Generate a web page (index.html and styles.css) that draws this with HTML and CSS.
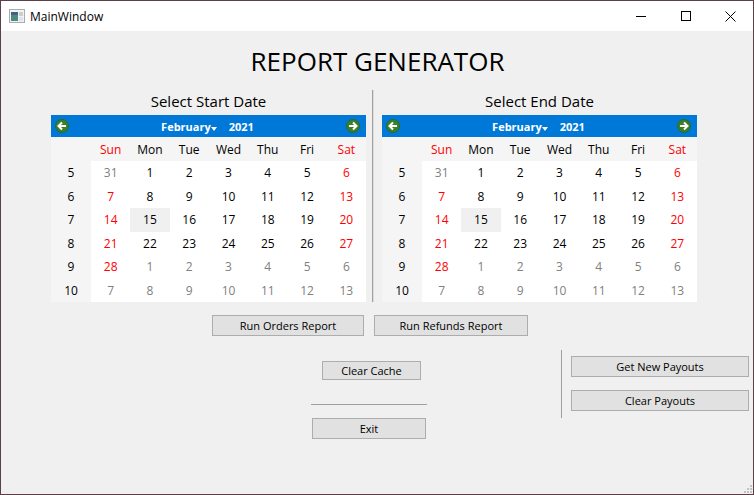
FILE: index.html
```html
<!DOCTYPE html>
<html lang="en">

<head>
    <meta charset="UTF-8">
    <title>MainWindow</title>
    <link rel="stylesheet" href="styles.css">
</head>

<body>
    <div class="window">
        <div class="titlebar">
            <svg class="appicon" width="16" height="16" viewBox="0 0 16 16">
                <rect x="0.5" y="1.5" width="15" height="13" fill="#f2f4f4" stroke="#a9adb0"></rect>
                <rect x="2" y="4" width="7" height="9" fill="#4f8a82"></rect>
                <rect x="2" y="4" width="7" height="3" fill="#45617e"></rect>
                <rect x="10" y="4" width="4" height="4" fill="#c9ced0"></rect>
                <rect x="10" y="9" width="4" height="4" fill="#dfe3e4"></rect>
            </svg>
            <span class="apptitle">MainWindow</span>
            <div class="winbtn">
                <svg width="10" height="10" viewBox="0 0 10 10"><path d="M0 5.5H10" stroke="#000" fill="none"></path></svg>
            </div>
            <div class="winbtn">
                <svg width="10" height="10" viewBox="0 0 10 10"><rect x="0.5" y="0.5" width="9" height="9" stroke="#000" fill="none"></rect></svg>
            </div>
            <div class="winbtn">
                <svg width="11" height="11" viewBox="0 0 11 11"><path d="M0.5 0.5L10.5 10.5M10.5 0.5L0.5 10.5" stroke="#000" fill="none"></path></svg>
            </div>
        </div>

        <div class="content">
            <h1 class="heading">REPORT GENERATOR</h1>

            <div class="calendars">
                <div class="calpanel">
                    <div class="callabel">Select Start Date</div>
                    <div class="calendar">
                        <div class="calnav">
                            <svg class="navicon" width="14" height="14" viewBox="0 0 14 14">
                                <circle cx="7" cy="7" r="6.5" fill="#38802a" stroke="#2a6a30"></circle>
                                <path d="M11 7H4M7 3.5L3.5 7L7 10.5" stroke="#fff" stroke-width="2" fill="none"></path>
                            </svg>
                            <div class="calmonth">
                                <span>February</span>
                                <svg class="monthmark" width="6" height="6" viewBox="0 0 6 6"><path d="M0 1H6L3 5Z" fill="#fff"></path></svg>
                                <span class="calyear">2021</span>
                            </div>
                            <svg class="navicon" width="14" height="14" viewBox="0 0 14 14">
                                <circle cx="7" cy="7" r="6.5" fill="#38802a" stroke="#2a6a30"></circle>
                                <path d="M3 7H10M7 3.5L10.5 7L7 10.5" stroke="#fff" stroke-width="2" fill="none"></path>
                            </svg>
                        </div>
                        <div class="calgrid">
                            <div class="hd"></div><div class="hd red">Sun</div><div class="hd">Mon</div><div class="hd">Tue</div><div class="hd">Wed</div><div class="hd">Thu</div><div class="hd">Fri</div><div class="hd red">Sat</div>
                            <div class="wk">5</div><div class="day off">31</div><div class="day">1</div><div class="day">2</div><div class="day">3</div><div class="day">4</div><div class="day">5</div><div class="day red">6</div>
                            <div class="wk">6</div><div class="day red">7</div><div class="day">8</div><div class="day">9</div><div class="day">10</div><div class="day">11</div><div class="day">12</div><div class="day red">13</div>
                            <div class="wk">7</div><div class="day red">14</div><div class="day today">15</div><div class="day">16</div><div class="day">17</div><div class="day">18</div><div class="day">19</div><div class="day red">20</div>
                            <div class="wk">8</div><div class="day red">21</div><div class="day">22</div><div class="day">23</div><div class="day">24</div><div class="day">25</div><div class="day">26</div><div class="day red">27</div>
                            <div class="wk">9</div><div class="day red">28</div><div class="day off">1</div><div class="day off">2</div><div class="day off">3</div><div class="day off">4</div><div class="day off">5</div><div class="day off">6</div>
                            <div class="wk">10</div><div class="day off">7</div><div class="day off">8</div><div class="day off">9</div><div class="day off">10</div><div class="day off">11</div><div class="day off">12</div><div class="day off">13</div>
                        </div>
                    </div>
                </div>

                <div class="vline"></div>

                <div class="calpanel">
                    <div class="callabel">Select End Date</div>
                    <div class="calendar">
                        <div class="calnav">
                            <svg class="navicon" width="14" height="14" viewBox="0 0 14 14">
                                <circle cx="7" cy="7" r="6.5" fill="#38802a" stroke="#2a6a30"></circle>
                                <path d="M11 7H4M7 3.5L3.5 7L7 10.5" stroke="#fff" stroke-width="2" fill="none"></path>
                            </svg>
                            <div class="calmonth">
                                <span>February</span>
                                <svg class="monthmark" width="6" height="6" viewBox="0 0 6 6"><path d="M0 1H6L3 5Z" fill="#fff"></path></svg>
                                <span class="calyear">2021</span>
                            </div>
                            <svg class="navicon" width="14" height="14" viewBox="0 0 14 14">
                                <circle cx="7" cy="7" r="6.5" fill="#38802a" stroke="#2a6a30"></circle>
                                <path d="M3 7H10M7 3.5L10.5 7L7 10.5" stroke="#fff" stroke-width="2" fill="none"></path>
                            </svg>
                        </div>
                        <div class="calgrid">
                            <div class="hd"></div><div class="hd red">Sun</div><div class="hd">Mon</div><div class="hd">Tue</div><div class="hd">Wed</div><div class="hd">Thu</div><div class="hd">Fri</div><div class="hd red">Sat</div>
                            <div class="wk">5</div><div class="day off">31</div><div class="day">1</div><div class="day">2</div><div class="day">3</div><div class="day">4</div><div class="day">5</div><div class="day red">6</div>
                            <div class="wk">6</div><div class="day red">7</div><div class="day">8</div><div class="day">9</div><div class="day">10</div><div class="day">11</div><div class="day">12</div><div class="day red">13</div>
                            <div class="wk">7</div><div class="day red">14</div><div class="day today">15</div><div class="day">16</div><div class="day">17</div><div class="day">18</div><div class="day">19</div><div class="day red">20</div>
                            <div class="wk">8</div><div class="day red">21</div><div class="day">22</div><div class="day">23</div><div class="day">24</div><div class="day">25</div><div class="day">26</div><div class="day red">27</div>
                            <div class="wk">9</div><div class="day red">28</div><div class="day off">1</div><div class="day off">2</div><div class="day off">3</div><div class="day off">4</div><div class="day off">5</div><div class="day off">6</div>
                            <div class="wk">10</div><div class="day off">7</div><div class="day off">8</div><div class="day off">9</div><div class="day off">10</div><div class="day off">11</div><div class="day off">12</div><div class="day off">13</div>
                        </div>
                    </div>
                </div>
            </div>

            <div class="reportrow">
                <button class="btn orders">Run Orders Report</button>
                <button class="btn refunds">Run Refunds Report</button>
            </div>

            <div class="lower">
                <div class="centercol">
                    <button class="btn cache">Clear Cache</button>
                    <div class="hline"></div>
                    <button class="btn exit">Exit</button>
                </div>
                <div class="payouts">
                    <button class="btn payout">Get New Payouts</button>
                    <button class="btn payout">Clear Payouts</button>
                </div>
            </div>
        </div>

        <svg class="grip" width="9" height="9" viewBox="0 0 9 9">
            <path d="M6 0h2v2H6zM3 3h2v2H3zM6 3h2v2H6zM0 6h2v2H0zM3 6h2v2H3zM6 6h2v2H6z" fill="#c4c4c4"></path>
        </svg>
    </div>
</body>

</html>
```

FILE: styles.css
```css
html, body {
    margin: 0;
    padding: 0;
}

body {
    font-family: "Open Sans", "Noto Sans", sans-serif;
    font-size: 12px;
    color: #000;
}

.window {
    position: relative;
    box-sizing: border-box;
    width: 754px;
    height: 495px;
    background-color: #f0f0f0;
    border: 1px solid #5c4048;
    overflow: hidden;
}

.titlebar {
    display: flex;
    align-items: center;
    height: 30px;
    background-color: #fff;
}

.appicon {
    margin-left: 8px;
}

.apptitle {
    margin-left: 5px;
    flex: 1;
    font-size: 12px;
}

.winbtn {
    display: flex;
    align-items: center;
    justify-content: center;
    width: 45px;
    height: 30px;
}

.content {
    display: flex;
    flex-direction: column;
}

.heading {
    margin: 14px 0 0 0;
    height: 32px;
    line-height: 32px;
    padding-left: 1px;
    text-align: center;
    font-size: 26px;
    font-weight: 400;
}

.calendars {
    display: flex;
    margin: 13px 0 0 50px;
}

.calpanel {
    width: 315px;
}

.callabel {
    height: 25px;
    line-height: 22px;
    text-align: center;
    font-size: 15px;
}

.vline {
    width: 1px;
    height: 212px;
    margin: 0 8px 0 6px;
    background-color: #a0a0a0;
    border-right: 1px solid #dcdcdc;
}

.calendar {
    width: 315px;
}

.calnav {
    display: flex;
    align-items: center;
    justify-content: space-between;
    height: 22px;
    padding: 0 6px 0 4px;
    box-sizing: border-box;
    background-color: #0078d7;
}

.navicon {
    margin-bottom: 1px;
}

.calmonth {
    display: flex;
    align-items: center;
    color: #fff;
    font-size: 11px;
    font-weight: 700;
}

.monthmark {
    margin: 5px 0 0 0;
}

.calyear {
    margin-left: 12px;
}

.calgrid {
    display: grid;
    grid-template-columns: 40px repeat(7, 1fr);
    grid-template-rows: 24px repeat(6, 23.5px);
    background-color: #fff;
}

.hd, .wk {
    display: flex;
    align-items: center;
    justify-content: center;
    background-color: #f5f5f5;
}

.day {
    display: flex;
    align-items: center;
    justify-content: center;
}

.red {
    color: #ff0000;
}

.off {
    color: #808080;
}

.today {
    background-color: #f0f0f0;
}

.reportrow {
    display: flex;
    gap: 10px;
    margin: 13px 0 0 211px;
}

.btn {
    display: block;
    padding: 0;
    font-family: inherit;
    font-size: 11px;
    color: #000;
    background-color: #e1e1e1;
    border: 1px solid #adadad;
    border-radius: 0;
    box-sizing: border-box;
}

.orders {
    width: 152px;
    height: 21px;
}

.refunds {
    width: 154px;
    height: 21px;
}

.lower {
    display: flex;
    align-items: flex-start;
}

.centercol {
    display: flex;
    flex-direction: column;
    margin: 25px 0 0 310px;
    width: 116px;
}

.cache {
    width: 99px;
    height: 19px;
    margin-left: 11px;
}

.hline {
    height: 1px;
    margin-top: 24px;
    background-color: #a0a0a0;
}

.exit {
    width: 114px;
    height: 21px;
    margin: 13px 0 0 1px;
}

.payouts {
    display: flex;
    flex-direction: column;
    gap: 13px;
    box-sizing: border-box;
    height: 68px;
    margin: 14px 0 0 134px;
    padding: 6px 0 0 9px;
    border-left: 1px solid #a0a0a0;
}

.payout {
    width: 178px;
    height: 21px;
}

.grip {
    position: absolute;
    right: 0;
    bottom: 0;
}
```
